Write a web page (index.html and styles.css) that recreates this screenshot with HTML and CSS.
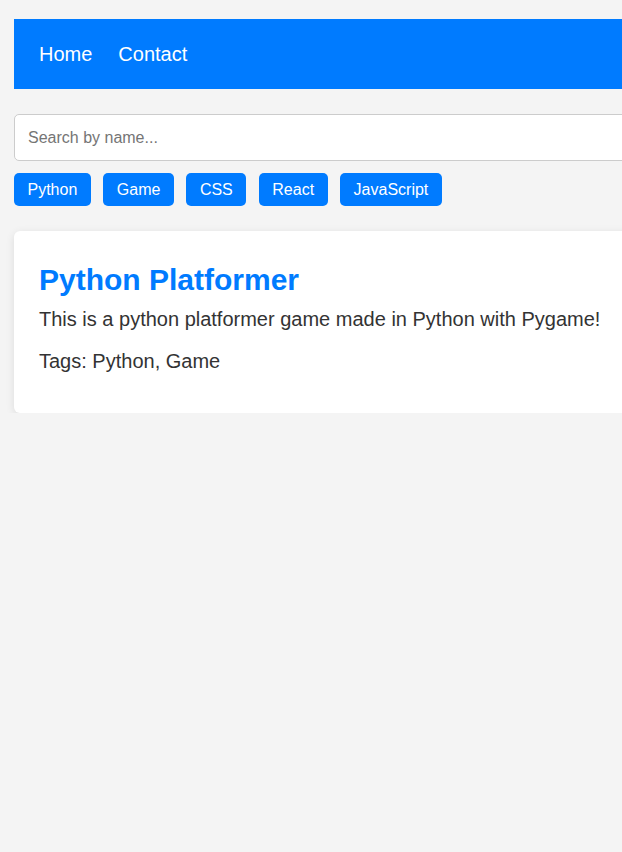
FILE: index.html
```html
<!DOCTYPE html>
<html lang="en">
<head>
<meta charset="utf-8">
<title>Projects</title>
<link rel="stylesheet" href="styles.css">
</head>
<body>
<div class="page">
  <nav class="nav">
    <a class="nav-link" href="#">Home</a>
    <a class="nav-link" href="#">Contact</a>
  </nav>
  <input class="search" type="text" placeholder="Search by name...">
  <div class="tags">
    <button class="tag">Python</button>
    <button class="tag">Game</button>
    <button class="tag">CSS</button>
    <button class="tag">React</button>
    <button class="tag">JavaScript</button>
  </div>
  <div class="card">
    <h2 class="card-title">Python Platformer</h2>
    <p class="card-desc">This is a python platformer game made in Python with Pygame!</p>
    <p class="card-tags">Tags: Python, Game</p>
  </div>
</div>
</body>
</html>
```
FILE: styles.css
```css
html {
  overflow: hidden;
}
body {
  margin: 0;
  background: #f4f4f4;
  font-family: "Liberation Sans", Arial, sans-serif;
  color: #333;
}
.page {
  width: 900px;
  padding: 19px 0 0 14px;
  display: flex;
  flex-direction: column;
}
.nav {
  background: #007bff;
  height: 70px;
  padding: 0 25px;
  display: flex;
  align-items: center;
  gap: 26px;
  box-sizing: border-box;
}
.nav-link {
  color: #fff;
  text-decoration: none;
  font-size: 20px;
}
.search {
  margin-top: 25px;
  height: 47px;
  box-sizing: border-box;
  border: 1px solid #ccc;
  border-radius: 5px;
  padding: 0 13px;
  font-family: "Liberation Sans", Arial, sans-serif;
  font-size: 16px;
  background: #fff;
  color: #333;
}
.search::placeholder {
  color: #757575;
}
.tags {
  margin-top: 12px;
  display: flex;
  gap: 12.5px;
}
.tag {
  height: 33px;
  padding: 0 13.5px;
  border: none;
  border-radius: 5px;
  background: #007bff;
  color: #fff;
  font-family: "Liberation Sans", Arial, sans-serif;
  font-size: 16px;
}
.card {
  margin-top: 25px;
  background: #fff;
  border-radius: 6px;
  box-shadow: 0 2px 8px rgba(0, 0, 0, 0.1);
  padding: 31px 25px 25px;
  height: 182px;
  box-sizing: border-box;
}
.card-title {
  margin: 0;
  color: #007bff;
  font-size: 30px;
  font-weight: bold;
  line-height: 35px;
}
.card-desc {
  margin: 10px 0 0;
  font-size: 20px;
  line-height: 24px;
}
.card-tags {
  margin: 18px 0 0;
  font-size: 20px;
  line-height: 24px;
}
```
